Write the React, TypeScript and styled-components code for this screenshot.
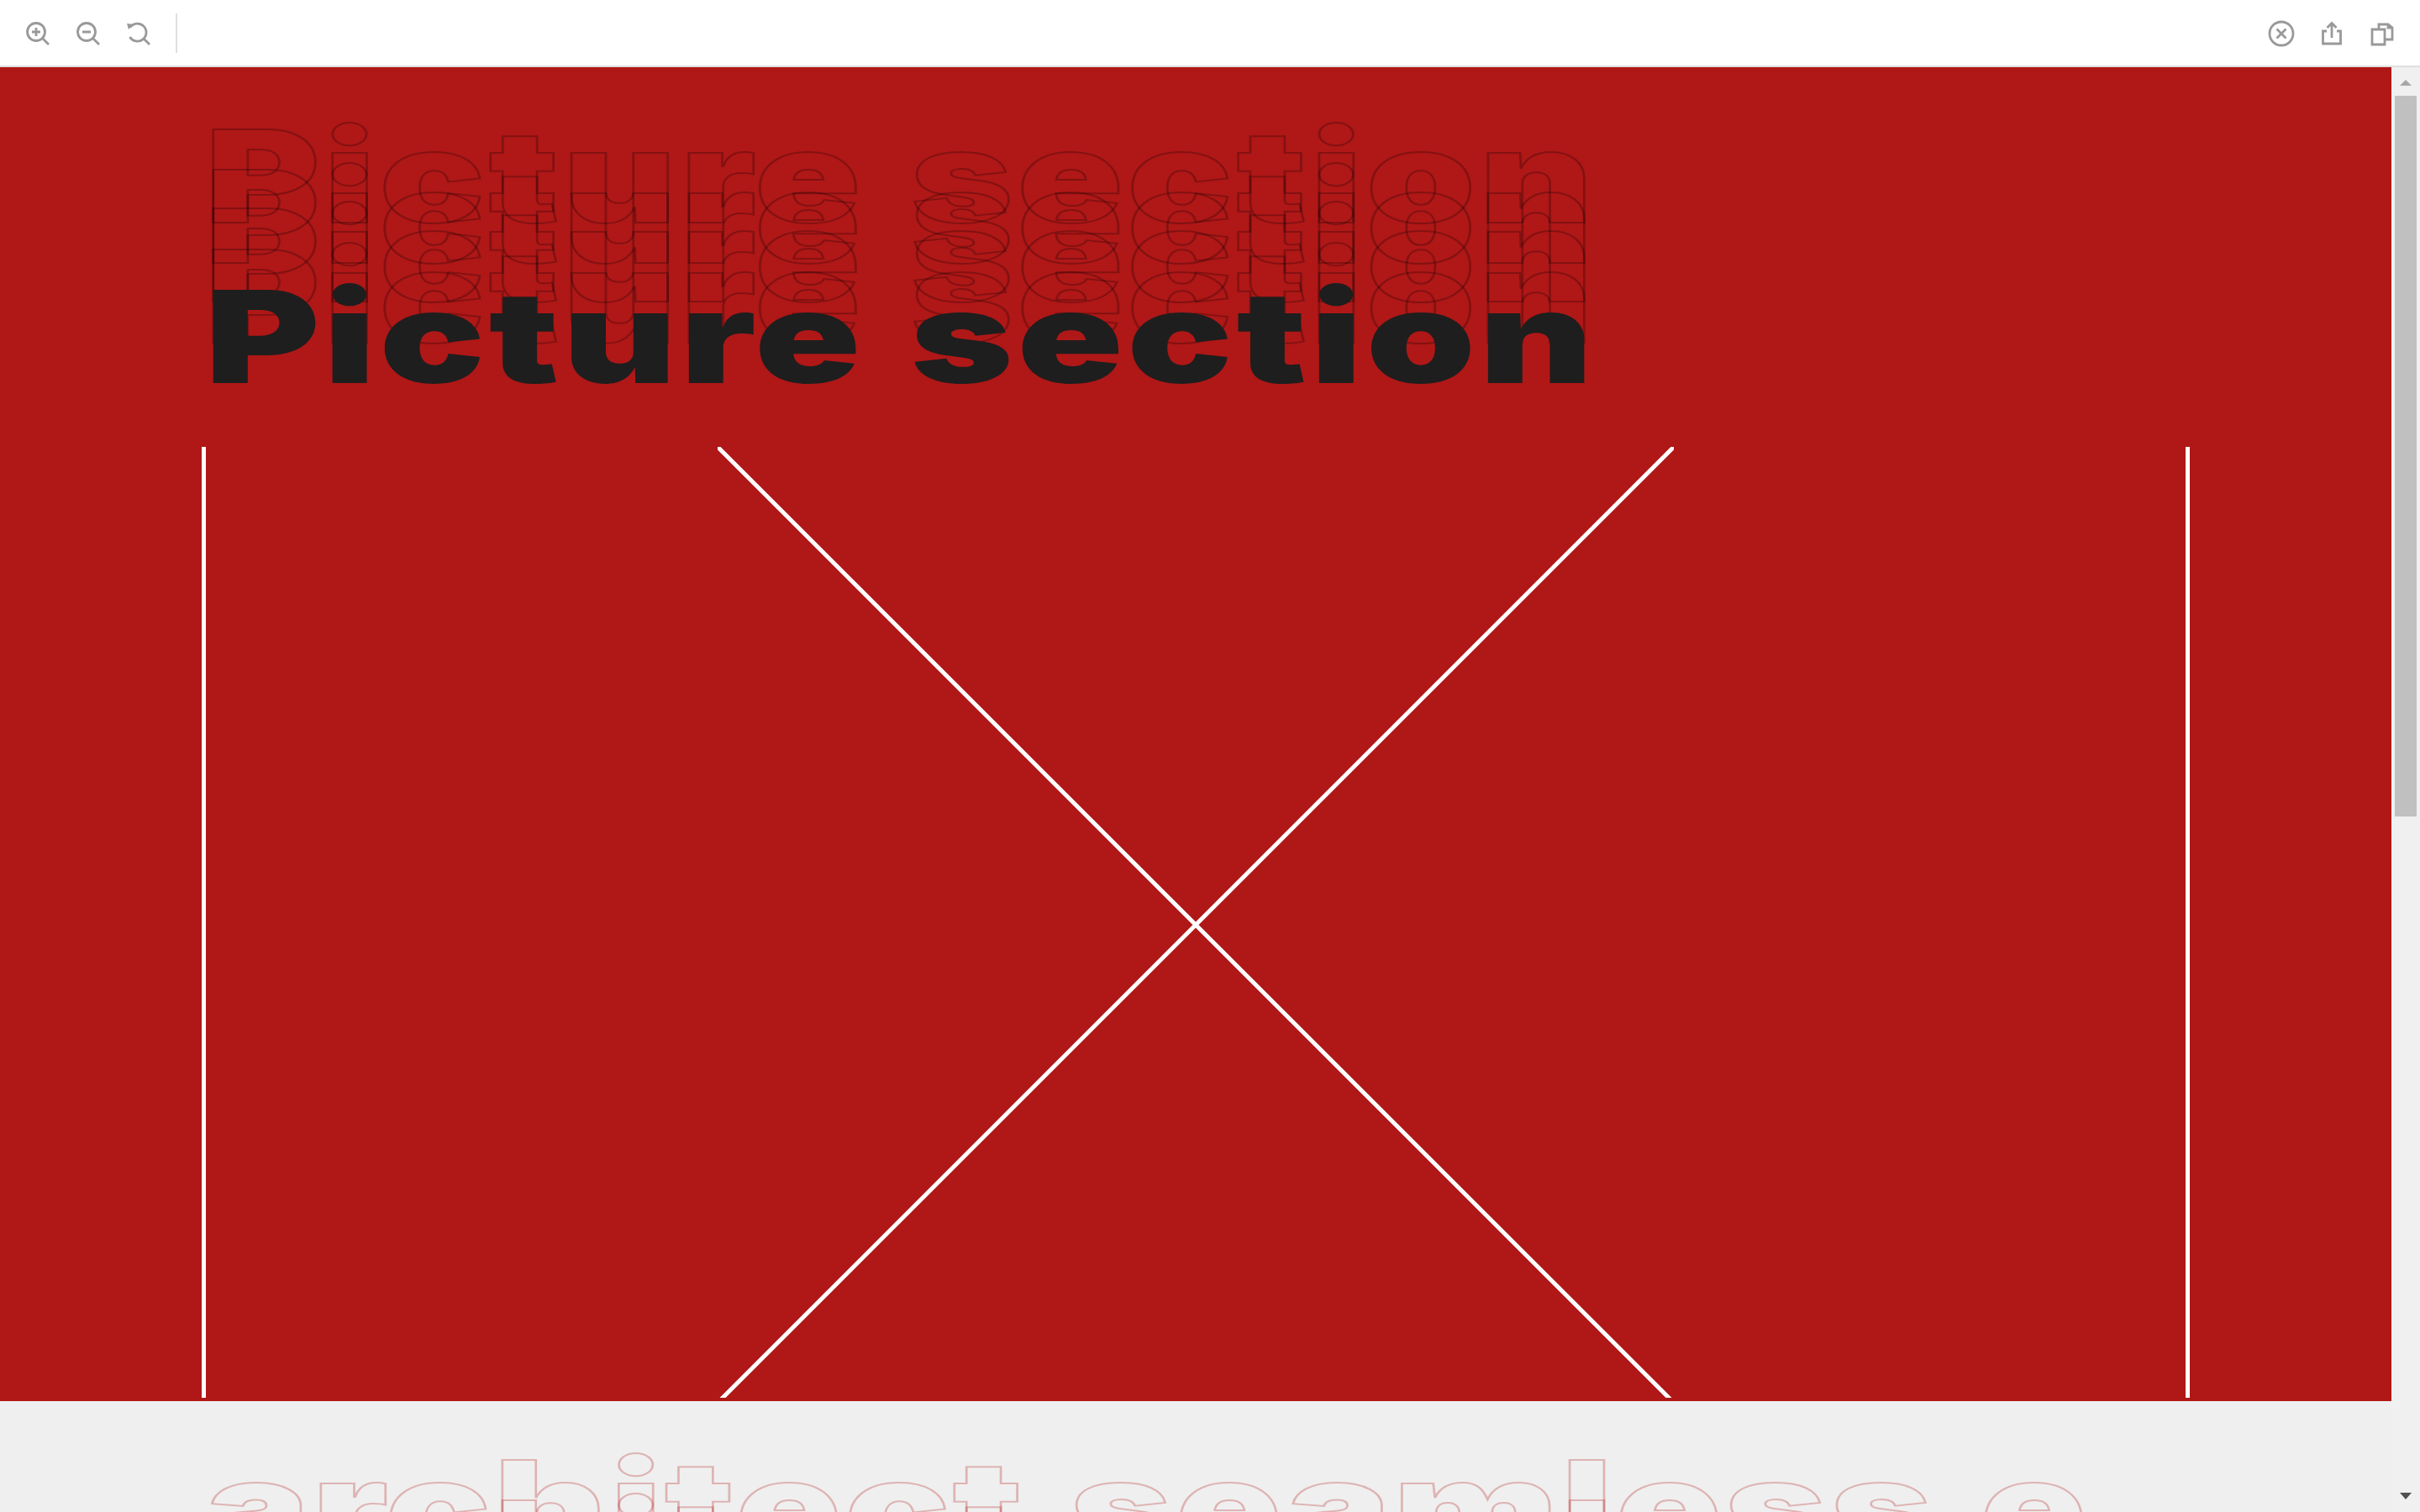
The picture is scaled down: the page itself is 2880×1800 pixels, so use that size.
import React from "react";
import styled, { createGlobalStyle, css } from "styled-components";

const GlobalStyle = createGlobalStyle`
  html, body {
    margin: 0;
    padding: 0;
    height: 100%;
    overflow: hidden;
    background: #efefef;
    font-family: Inter, "Liberation Sans", sans-serif;
  }
`;

const ghostOffsets = [-191, -143, -97, -48];

const App = () => {
  return (
    <Frame>
      <GlobalStyle />
      <Toolbar>
        <ToolGroup>
          <ToolIcon viewBox="0 0 34 34">
            <circle cx="15" cy="15" r="10.5" />
            <path d="M22.5 22.5 L30 30 M15 10 V20 M10 15 H20" />
          </ToolIcon>
          <ToolIcon viewBox="0 0 34 34">
            <circle cx="15" cy="15" r="10.5" />
            <path d="M22.5 22.5 L30 30 M10 15 H20" />
          </ToolIcon>
          <ToolIcon viewBox="0 0 34 34">
            <path d="M7 9.5 A10.5 10.5 0 1 1 6.5 21 M22.5 22.5 L30 30" />
            <path className="solid" d="M3 5 L11 6 L5 12 Z" />
          </ToolIcon>
          <Divider />
        </ToolGroup>
        <ToolGroup>
          <ToolIcon viewBox="0 0 34 34">
            <circle cx="17" cy="17" r="14" />
            <path d="M11.5 11.5 L22.5 22.5 M22.5 11.5 L11.5 22.5" />
          </ToolIcon>
          <ToolIcon viewBox="0 0 34 34">
            <path d="M11 14 H6.5 V29 H27.5 V14 H23 M17 22 V5 M11.5 10 L17 4.5 L22.5 10" />
          </ToolIcon>
          <ToolIcon viewBox="0 0 34 34">
            <path d="M13 12 H5 V30 H20 V12 Z M13 12 V6 H24 L29 10 V24 H20 M24 6 V10 H29" />
          </ToolIcon>
        </ToolGroup>
      </Toolbar>
      <Viewer>
        <Content>
          <PictureSection>
            <Heading>
              {ghostOffsets.map((offset) => (
                <GhostTitle key={offset} $offset={offset} $stroke="rgba(0, 0, 0, 0.25)" aria-hidden>
                  Picture section
                </GhostTitle>
              ))}
              <SolidTitle>Picture section</SolidTitle>
            </Heading>
            <Placeholder>
              <svg viewBox="0 0 1138 1132" width="1138" height="1132">
                <path d="M0 0 L1138 1138 M1138 0 L0 1138" stroke="#fff" strokeWidth="5" fill="none" />
              </svg>
            </Placeholder>
          </PictureSection>
          <NextSection>
            <NextHeading>
              <NextTitle $offset={0} $stroke="rgba(178, 24, 24, 0.28)">architect seamless e</NextTitle>
              <NextTitle $offset={48} $stroke="rgba(178, 24, 24, 0.28)" aria-hidden>
                architect seamless e
              </NextTitle>
            </NextHeading>
          </NextSection>
        </Content>
        <Scrollbar>
          <ArrowUp />
          <Thumb />
          <ArrowDown />
        </Scrollbar>
      </Viewer>
    </Frame>
  );
};

const titleType = css`
  margin: 0;
  font-size: 152px;
  line-height: 180px;
  font-weight: 900;
  letter-spacing: 3.4px;
  word-spacing: 6px;
  white-space: nowrap;
  transform-origin: 0 50%;
  transform: translateX(4px) scaleX(1.37);
`;

const Frame = styled.div`
  width: 2880px;
  height: 1800px;
  display: flex;
  flex-direction: column;
  overflow: hidden;
`;

const Toolbar = styled.header`
  height: 78px;
  flex: none;
  background: #fff;
  border-bottom: 2px solid #e0e0e0;
  display: flex;
  align-items: center;
  justify-content: space-between;
  padding: 0 28px;
`;

const ToolGroup = styled.div`
  display: flex;
  align-items: center;
  gap: 26px;
`;

const ToolIcon = styled.svg`
  width: 34px;
  height: 34px;
  margin-top: 2px;
  fill: none;
  stroke: #999;
  stroke-width: 2.8;

  .solid {
    fill: #999;
    stroke: none;
  }
`;

const Divider = styled.div`
  width: 2px;
  height: 47px;
  margin-left: 1px;
  background: #e0e0e0;
`;

const Viewer = styled.div`
  flex: 1;
  min-height: 0;
  display: flex;
`;

const Content = styled.main`
  flex: 1;
  min-width: 0;
  overflow: hidden;
`;

const PictureSection = styled.section`
  height: 1588px;
  box-sizing: border-box;
  background: #b01717;
  padding: 0 240px;
  overflow: hidden;
`;

const NextSection = styled.section`
  padding: 36px 240px 0;
  height: 300px;
  overflow: hidden;
`;

const Heading = styled.div`
  position: relative;
  padding-top: 231px;
`;

const NextHeading = styled.div`
  position: relative;
  height: 180px;
`;

const SolidTitle = styled.h1`
  ${titleType}
  color: #1e1e1e;
  position: relative;
  z-index: 1;
`;

const GhostTitle = styled.div<{ $offset: number; $stroke: string }>`
  ${titleType}
  position: absolute;
  left: 0;
  bottom: ${({ $offset }) => -$offset}px;
  color: transparent;
  -webkit-text-stroke: 2px ${({ $stroke }) => $stroke};
`;

const NextTitle = styled(GhostTitle)`
  letter-spacing: 2.4px;
`;

const Placeholder = styled.div`
  margin-top: 41px;
  height: 1132px;
  border-left: 5px solid #fff;
  border-right: 5px solid #fff;
  display: flex;
  justify-content: center;
  overflow: hidden;
`;

const Scrollbar = styled.aside`
  width: 34px;
  flex: none;
  background: #f0f0f0;
  display: flex;
  flex-direction: column;
  align-items: center;
  position: relative;
  padding-top: 15px;
  box-sizing: border-box;
`;

const ArrowUp = styled.div`
  width: 0;
  height: 0;
  border-left: 7px solid transparent;
  border-right: 7px solid transparent;
  border-bottom: 7px solid #a8a8a8;
`;

const Thumb = styled.div`
  width: 26px;
  height: 858px;
  background: #c0c0c0;
  margin-top: 12px;
`;

const ArrowDown = styled.div`
  position: absolute;
  left: 10px;
  bottom: 15px;
  width: 0;
  height: 0;
  border-left: 7px solid transparent;
  border-right: 7px solid transparent;
  border-top: 8px solid #505050;
`;

export default App;
